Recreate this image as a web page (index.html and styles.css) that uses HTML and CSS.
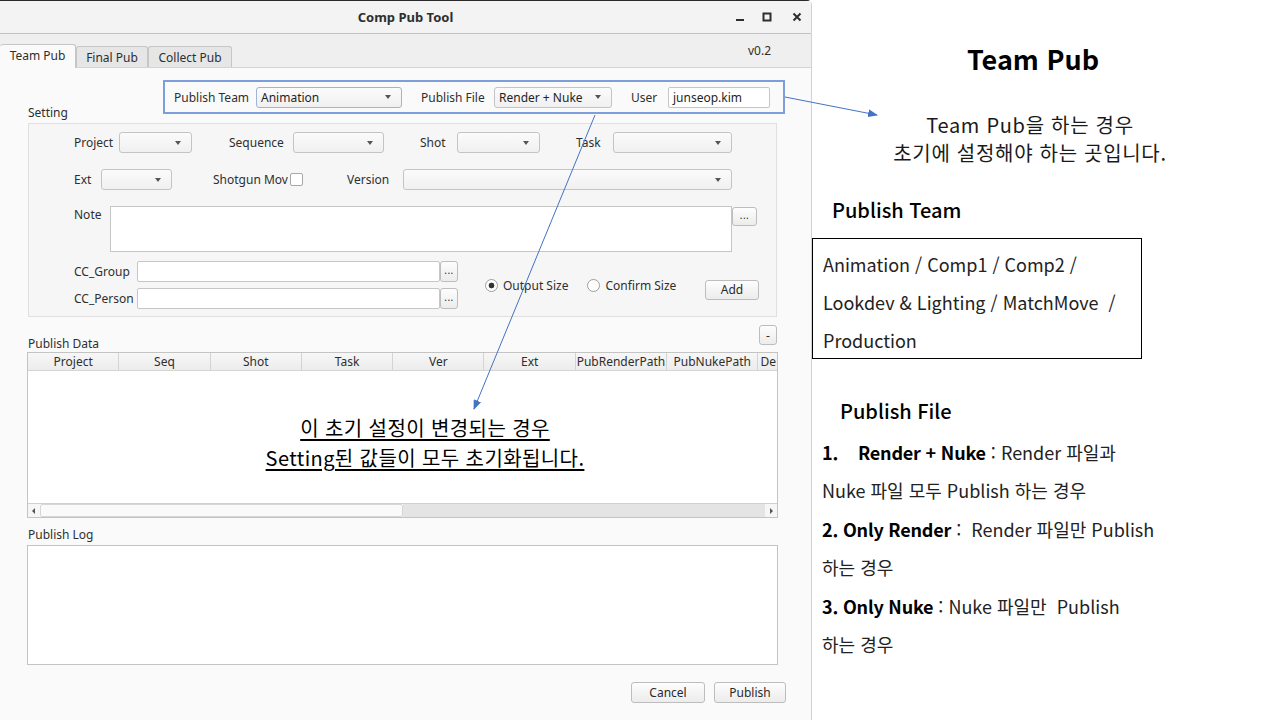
FILE: index.html
```html
<!DOCTYPE html>
<html lang="ko">
<head>
<meta charset="utf-8">
<title>Comp Pub Tool</title>
<link rel="stylesheet" href="styles.css">
</head>
<body>
<div class="window">
  <div class="titlebar">
    <div></div>
    <div class="title">Comp Pub Tool</div>
    <div class="wincontrols">
      <svg class="wc wc-min" width="10" height="10" viewBox="0 0 10 10"><rect x="1" y="7" width="8" height="2" fill="#2e2e2e"/></svg>
      <svg class="wc wc-max" width="10" height="10" viewBox="0 0 10 10"><rect x="1.5" y="1.5" width="7" height="7" fill="none" stroke="#2e2e2e" stroke-width="2"/></svg>
      <svg class="wc wc-close" width="10" height="10" viewBox="0 0 10 10"><path d="M1.5 1.5 L8.5 8.5 M8.5 1.5 L1.5 8.5" stroke="#2e2e2e" stroke-width="2"/></svg>
    </div>
  </div>
  <div class="tabstrip">
    <div class="tab tab-active">Team Pub</div>
    <div class="tab tab-final">Final Pub</div>
    <div class="tab tab-collect">Collect Pub</div>
    <div class="version">v0.2</div>
  </div>
  <div class="content">
    <div class="toprow">
      <div class="setting-label">Setting</div>
      <div class="pubbox">
        <span class="lbl w-pubteam">Publish Team</span>
        <div class="combo w146 combo-active"><span>Animation</span></div>
        <span class="lbl w-pubfile">Publish File</span>
        <div class="combo w118"><span>Render + Nuke</span></div>
        <span class="lbl w-user">User</span>
        <div class="field w102">junseop.kim</div>
      </div>
    </div>

    <div class="group">
      <div class="grow row1">
        <span class="lbl w45">Project</span>
        <div class="combo w73"><span></span></div>
        <span class="lbl w64 ml37">Sequence</span>
        <div class="combo w91"><span></span></div>
        <span class="lbl w37 ml36">Shot</span>
        <div class="combo w83"><span></span></div>
        <span class="lbl w37 ml36">Task</span>
        <div class="combo w119"><span></span></div>
      </div>
      <div class="grow row2">
        <span class="lbl w27">Ext</span>
        <div class="combo w71"><span></span></div>
        <span class="lbl w77 ml41">Shotgun Mov</span>
        <div class="checkbox"></div>
        <span class="lbl w56 ml44">Version</span>
        <div class="combo w329"><span></span></div>
      </div>
      <div class="grow row3">
        <span class="lbl w36 note-lbl">Note</span>
        <div class="textarea"></div>
        <div class="btn dots dots-note">...</div>
      </div>
      <div class="grow row4">
        <div class="cc-col">
          <div class="cc-row">
            <span class="lbl w63">CC_Group</span>
            <div class="field w303"></div>
            <div class="btn dots dots-cc">...</div>
          </div>
          <div class="cc-row">
            <span class="lbl w63">CC_Person</span>
            <div class="field w303"></div>
            <div class="btn dots dots-cc">...</div>
          </div>
        </div>
        <div class="radio checked"></div><span class="radio-lbl">Output Size</span>
        <div class="radio radio2"></div><span class="radio-lbl">Confirm Size</span>
        <div class="btn add-btn">Add</div>
      </div>
    </div>

    <div class="datarow">
      <div class="section-label">Publish Data</div>
      <div class="btn minus-btn">-</div>
    </div>
    <div class="table">
      <div class="thead">
        <div class="th">Project</div>
        <div class="th">Seq</div>
        <div class="th">Shot</div>
        <div class="th">Task</div>
        <div class="th">Ver</div>
        <div class="th">Ext</div>
        <div class="th">PubRenderPath</div>
        <div class="th">PubNukePath</div>
        <div class="th th-clip">De</div>
      </div>
      <div class="tbody"></div>
      <div class="hscroll">
        <div class="sb-arrow"><svg width="6" height="8" viewBox="0 0 6 8"><path d="M4 1 L1 4 L4 7 Z" fill="#555"/></svg></div>
        <div class="sb-handle"></div>
        <div class="sb-track"></div>
        <div class="sb-arrow"><svg width="6" height="8" viewBox="0 0 6 8"><path d="M2 1 L5 4 L2 7 Z" fill="#555"/></svg></div>
      </div>
    </div>

    <div class="section-label log-label">Publish Log</div>
    <div class="logbox"></div>

    <div class="actions">
      <div class="btn act-btn w74">Cancel</div>
      <div class="btn act-btn w72">Publish</div>
    </div>
  </div>
</div>

<div class="slide">
  <h1 class="s-title">Team Pub</h1>
  <p class="s-intro">Team Pub을 하는 경우<br>초기에 설정해야 하는 곳입니다.</p>
  <h2 class="s-head s-head-team">Publish Team</h2>
  <div class="s-box">Animation / Comp1 / Comp2 /<br>Lookdev &amp; Lighting / MatchMove &nbsp;/<br>Production</div>
  <h2 class="s-head s-head-file">Publish File</h2>
  <div class="s-list">
    <div><span class="num">1.</span><b>Render + Nuke</b> : Render 파일과</div>
    <div>Nuke 파일 모두 Publish 하는 경우</div>
    <div><b>2. Only Render</b> : &nbsp;Render 파일만 Publish</div>
    <div>하는 경우</div>
    <div><b>3. Only Nuke</b> : Nuke 파일만 &nbsp;Publish</div>
    <div>하는 경우</div>
  </div>
</div>

<div class="annot-text">
  <span>이 초기 설정이 변경되는 경우</span><br>
  <span>Setting된 값들이 모두 초기화됩니다.</span>
</div>

<svg class="annot-arrows" width="1280" height="720" viewBox="0 0 1280 720">
  <defs>
    <marker id="ah" markerWidth="10" markerHeight="8" refX="9" refY="4" orient="auto" markerUnits="userSpaceOnUse">
      <path d="M0 0 L10 4 L0 8 Z" fill="#4472c4"/>
    </marker>
  </defs>
  <line x1="785" y1="97" x2="877" y2="115" stroke="#4472c4" stroke-width="1" marker-end="url(#ah)"/>
  <line x1="595" y1="115" x2="474" y2="409" stroke="#4472c4" stroke-width="1" marker-end="url(#ah)"/>
</svg>
</body>
</html>
```

FILE: styles.css
```css
* { box-sizing: border-box; }
html, body { margin: 0; padding: 0; }
body {
  width: 1280px;
  height: 720px;
  overflow: hidden;
  display: flex;
  background: #ffffff;
  position: relative;
  font-family: "Noto Sans", "Noto Sans CJK KR", sans-serif;
  font-size: 12px;
  color: #2f2f2f;
}

/* ---------- window ---------- */
.window {
  width: 812px;
  height: 720px;
  flex: none;
  background: #fafafa;
  border-top: 1px solid #2a2a2a;
  border-right: 1px solid #d2d2d2;
  border-top-right-radius: 5px;
  display: flex;
  flex-direction: column;
}
.titlebar {
  height: 33px;
  flex: none;
  background: #f3f3f3;
  border-bottom: 1px solid #c2c2c2;
  display: grid;
  grid-template-columns: 1fr auto 1fr;
  align-items: center;
}
.title {
  font-weight: 700;
  font-size: 13px;
  color: #2e2e2e;
}
.wincontrols {
  display: flex;
  justify-content: flex-end;
  align-items: center;
  padding-right: 9px;
}
.wc { display: block; }
.wc-max { margin-left: 17px; }
.wc-close { margin-left: 20px; }

.tabstrip {
  height: 34px;
  flex: none;
  background: #efefef;
  border-bottom: 1px solid #d4d4d4;
  display: flex;
  align-items: flex-end;
}
.tab {
  height: 21px;
  border: 1px solid #c6c6c6;
  border-bottom: none;
  border-radius: 3px 3px 0 0;
  background: #e6e6e6;
  display: flex;
  align-items: center;
  justify-content: center;
  color: #2e2e2e;
}
.tab-active {
  width: 76px;
  height: 24px;
  margin-bottom: -1px;
  background: #fafafa;
  border-left: none;
  padding-bottom: 2px;
}
.tab-final { width: 72px; }
.tab-collect { width: 84px; }
.version {
  margin-left: auto;
  margin-right: 40px;
  align-self: center;
  color: #2e2e2e;
}

.content {
  display: flex;
  flex-direction: column;
}

.toprow {
  display: flex;
  margin-top: 12px;
  padding-left: 28px;
}
.setting-label {
  width: 135px;
  margin-top: 25px;
  line-height: 16px;
}
.pubbox {
  width: 622px;
  height: 34px;
  border: 2px solid #7d9ed8;
  display: flex;
  align-items: center;
  padding-left: 9px;
}
.lbl { flex: none; white-space: nowrap; }
.w-pubteam { width: 82px; }
.w-pubfile { width: 73px; margin-left: 19px; }
.w-user { width: 37px; margin-left: 19px; }

.combo {
  flex: none;
  height: 21px;
  border: 1px solid #c4c4c4;
  border-radius: 3px;
  background: linear-gradient(#fbfbfb, #f0f0f0);
  display: flex;
  align-items: center;
  justify-content: space-between;
  padding: 0 10px 0 4px;
  color: #1f1f1f;
}
.combo::after {
  content: "";
  border-left: 3.5px solid transparent;
  border-right: 3.5px solid transparent;
  border-top: 4px solid #555;
}
.combo-active { border-color: #9fb4d6; }
.field {
  flex: none;
  height: 21px;
  border: 1px solid #c6c6c6;
  border-radius: 2px;
  background: #fff;
  padding: 0 4px;
  display: flex;
  align-items: center;
  color: #1f1f1f;
}
.w146 { width: 146px; }
.w118 { width: 118px; }
.w102 { width: 102px; }
.w73 { width: 73px; }
.w91 { width: 91px; }
.w83 { width: 83px; }
.w119 { width: 119px; }
.w71 { width: 71px; }
.w329 { width: 329px; }
.w303 { width: 303px; }
.w74 { width: 74px; }
.w72 { width: 72px; }
.w45 { width: 45px; }
.w64 { width: 64px; }
.w37 { width: 37px; }
.w27 { width: 27px; }
.w77 { width: 77px; }
.w56 { width: 56px; }
.w36 { width: 36px; }
.w63 { width: 63px; }
.ml37 { margin-left: 37px; }
.ml36 { margin-left: 36px; }
.ml41 { margin-left: 41px; }
.ml44 { margin-left: 44px; }

/* ---------- setting group ---------- */
.group {
  margin-left: 28px;
  width: 749px;
  border: 1px solid #e0e0e0;
  background: #f6f6f6;
  padding: 8px 17px 7px 45px;
  margin-top: 2px;
}
.grow { display: flex; align-items: center; }
.row1 { height: 21px; }
.row2 { height: 21px; margin-top: 16px; }
.checkbox {
  width: 13px;
  height: 13px;
  border: 1px solid #a8a8a8;
  border-radius: 2px;
  background: #fff;
  flex: none;
}
.row3 { margin-top: 16px; align-items: flex-start; }
.note-lbl { line-height: 16px; margin-top: 1px; }
.textarea {
  width: 622px;
  height: 46px;
  border: 1px solid #c6c6c6;
  background: #fff;
  flex: none;
}
.btn {
  flex: none;
  border: 1px solid #bdbdbd;
  border-radius: 3px;
  background: linear-gradient(#fdfdfd, #ececec);
  display: flex;
  align-items: center;
  justify-content: center;
  color: #2a2a2a;
}
.dots { font-size: 10px; line-height: 1; padding-bottom: 3px; letter-spacing: 0.5px; }
.dots-note { width: 25px; height: 19px; margin-top: 1px; }
.dots-cc { width: 18px; height: 21px; }
.row4 { margin-top: 9px; }
.cc-col { display: flex; flex-direction: column; gap: 6px; }
.cc-row { display: flex; align-items: center; }
.radio {
  width: 13px;
  height: 13px;
  border-radius: 50%;
  border: 1px solid #9e9e9e;
  background: #fff;
  flex: none;
  margin-left: 27px;
}
.radio.checked { background: radial-gradient(circle, #333 0 2.6px, #fff 3.2px); }
.radio2 { margin-left: 19px; }
.radio-lbl { margin-left: 5px; white-space: nowrap; }
.add-btn {
  width: 54px;
  height: 20px;
  margin-left: auto;
  margin-top: 9px;
}

/* ---------- data ---------- */
.datarow {
  display: flex;
  justify-content: space-between;
  height: 27px;
  margin-top: 8px;
  padding: 0 34px 0 28px;
}
.section-label { line-height: 16px; align-self: flex-end; }
.minus-btn { width: 18px; height: 20px; align-self: flex-start; font-size: 12px; }
.table {
  margin-left: 27px;
  width: 751px;
  height: 166px;
  border: 1px solid #c4c4c4;
  background: #fff;
  display: flex;
  flex-direction: column;
}
.thead {
  height: 18px;
  flex: none;
  display: grid;
  grid-template-columns: repeat(8, 91.3px) 1fr;
  background: linear-gradient(#f7f7f7, #ececec);
  border-bottom: 1px solid #d4d4d4;
}
.th {
  border-right: 1px solid #d4d4d4;
  text-align: center;
  line-height: 17px;
  white-space: nowrap;
  color: #2e2e2e;
}
.th-clip { text-align: left; padding-left: 2px; border-right: none; }
.tbody { flex: 1; }
.hscroll {
  height: 14px;
  flex: none;
  display: flex;
  border-top: 1px solid #d0d0d0;
}
.sb-arrow {
  width: 12px;
  background: #f6f6f6;
  display: flex;
  align-items: center;
  justify-content: center;
}
.sb-handle {
  width: 363px;
  background: #fafafa;
  border: 1px solid #d6d6d6;
  border-radius: 2px;
}
.sb-track { flex: 1; background: #e4e4e4; }

.log-label { margin-top: 9px; padding-left: 28px; align-self: auto; }
.logbox {
  margin-top: 2px;
  margin-left: 27px;
  width: 751px;
  height: 120px;
  border: 1px solid #c4c4c4;
  background: #fff;
}
.actions {
  display: flex;
  justify-content: flex-end;
  gap: 9px;
  padding-right: 25px;
  margin-top: 17px;
}
.act-btn { height: 21px; }

/* ---------- slide ---------- */
.slide {
  flex: 1;
  font-family: "Noto Sans CJK KR", "Noto Sans", sans-serif;
  color: #111;
  display: flex;
  flex-direction: column;
}
.s-title {
  margin: 41px 0 0 0;
  padding-right: 26px;
  font-size: 27px;
  line-height: 36px;
  font-weight: 700;
  text-align: center;
  color: #000;
}
.s-intro {
  margin: 34px 0 0 0;
  padding-right: 32px;
  font-size: 20px;
  line-height: 28px;
  text-align: center;
  letter-spacing: 0.7px;
  color: #1a1a1a;
}
.s-head {
  margin: 0;
  font-size: 20px;
  line-height: 28px;
  font-weight: 500;
  color: #000;
}
.s-head-team { margin-top: 29px; padding-left: 20px; }
.s-box {
  margin-top: 14px;
  width: 330px;
  height: 121px;
  border: 1px solid #000;
  padding: 6px 10px;
  font-size: 18px;
  line-height: 38px;
  color: #222;
  white-space: nowrap;
}
.s-head-file { margin-top: 38px; padding-left: 28px; }
.s-list {
  margin-top: 8px;
  padding-left: 10px;
  font-size: 18px;
  line-height: 38.4px;
  color: #222;
  white-space: nowrap;
}
.s-list b { font-weight: 700; color: #000; letter-spacing: -0.2px; }
.num { display: inline-block; width: 36px; font-weight: 700; color: #000; }

/* ---------- annotations ---------- */
.annot-text {
  position: absolute;
  left: 225px;
  top: 413px;
  width: 400px;
  text-align: center;
  font-family: "Noto Sans CJK KR", "Noto Sans", sans-serif;
  font-size: 20px;
  line-height: 30px;
  letter-spacing: 0.4px;
  color: #000;
}
.annot-text span { text-decoration: underline; text-underline-offset: 3px; text-decoration-thickness: 1.5px; }
.annot-arrows {
  position: absolute;
  left: 0;
  top: 0;
  pointer-events: none;
}
```
